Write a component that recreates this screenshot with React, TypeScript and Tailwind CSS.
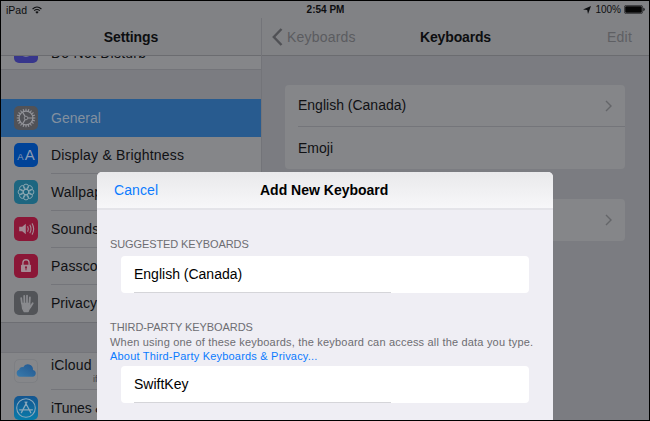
import type { ReactNode } from 'react';

function Chevron() {
  return (
    <svg width="8" height="12" viewBox="0 0 8 12" fill="none" stroke="#646569" strokeWidth="1.4">
      <path d="M1 1l5 5-5 5" />
    </svg>
  );
}

function GearIcon() {
  const teeth = Array.from({ length: 20 }, (_, i) => i * 18);
  return (
    <svg width="24" height="24" viewBox="0 0 24 24" fill="none" stroke="#93949a">
      <circle cx="12" cy="12" r="6.9" strokeWidth="1.3" />
      {teeth.map((a) => (
        <path key={a} d="M12 4.9V2.7" strokeWidth="1.1" transform={`rotate(${a} 12 12)`} />
      ))}
      <circle cx="12" cy="12" r="1.8" strokeWidth="0.9" />
      <path d="M13.8 12h5.3M11.1 10.4L8.5 6M11.1 13.6L8.5 18" strokeWidth="1.2" />
    </svg>
  );
}

function WallpaperIcon() {
  const petals = [0, 45, 90, 135, 180, 225, 270, 315];
  return (
    <svg width="24" height="24" viewBox="0 0 24 24" fill="none" stroke="#8fa9b3" strokeWidth="0.9">
      {petals.map((a) => (
        <circle key={a} cx="12" cy="6.7" r="2.6" transform={`rotate(${a} 12 12)`} />
      ))}
      <circle cx="12" cy="12" r="2.7" />
    </svg>
  );
}

function SoundIcon() {
  return (
    <svg width="24" height="24" viewBox="0 0 24 24" fill="none" stroke="#a58b95" strokeWidth="1.1">
      <path d="M5.2 9.7h3l3.6-3v10.6l-3.6-3h-3z" fill="#a58b95" stroke="none" />
      <path d="M13.6 9.2q1.5 2.8 0 5.6M15.8 7.8q2.4 4.2 0 8.4M18 6.4q3.3 5.6 0 11.2" />
    </svg>
  );
}

function LockIcon() {
  return (
    <svg width="24" height="24" viewBox="0 0 24 24">
      <path d="M8.9 11V8.8a3.1 3.1 0 0 1 6.2 0V11" fill="none" stroke="#a58b95" strokeWidth="1.4" />
      <rect x="7" y="10.7" width="10" height="7.3" rx="0.8" fill="#a58b95" />
      <circle cx="12" cy="13.3" r="1.1" fill="#861a39" />
      <path d="M12 13.5v2.8" stroke="#861a39" strokeWidth="0.9" />
    </svg>
  );
}

function HandIcon() {
  return (
    <svg width="24" height="24" viewBox="0 0 24 24" fill="none" stroke="#898a8e" strokeWidth="1.8" strokeLinecap="round" strokeLinejoin="round">
      <path d="M7.9 12.5L7.2 7.1M10.4 12L10.2 5M13 12V4.6M15.5 12.5l.4-6M16.2 16.2l2.5-4" />
      <path d="M7.9 12.3h7.7l1 3.6-1.9 3.1-.5 1.6h-4l-1.6-2.8z" fill="#898a8e" strokeWidth="1.2" />
    </svg>
  );
}

function CloudIcon() {
  return (
    <svg width="24" height="24" viewBox="0 0 24 24">
      <defs>
        <linearGradient id="cloud" x1="0" y1="1" x2="1" y2="0">
          <stop offset="0" stopColor="#397bac" />
          <stop offset="1" stopColor="#21568f" />
        </linearGradient>
      </defs>
      <rect x=".5" y=".5" width="23" height="23" rx="4.5" fill="none" stroke="#7a7b80" strokeWidth=".7" />
      <path d="M5.8 17.8a3.6 3.6 0 0 1-.6-7 3 3 0 0 1 4-2.6 5.2 5.2 0 0 1 9.8 2.7 3.5 3.5 0 0 1-.4 6.9z" fill="url(#cloud)" />
    </svg>
  );
}

function AppStoreIcon() {
  return (
    <svg width="24" height="24" viewBox="0 0 24 24" fill="none" stroke="#89a7bb" strokeWidth="1.3">
      <circle cx="12" cy="12" r="9.3" strokeWidth="1.1" />
      <path d="M12.9 6L7.4 16.6M11.1 6l5.7 10.8M5.6 13.8h12.8" strokeLinecap="round" />
    </svg>
  );
}

function Tile({ color, children }: { color: string; children?: ReactNode }) {
  return <div className={`h-6 w-6 shrink-0 overflow-hidden rounded-[5px] ${color}`}>{children}</div>;
}

type RowProps = { label: string; color: string; icon: ReactNode; text?: string; line?: boolean };

function Row({ label, color, icon, text = 'tracking-[0.15px] text-[#101114]', line = true }: RowProps) {
  return (
    <div className="flex h-[37px] shrink-0 pl-[13px]">
      <div className="pt-[6px]">
        <Tile color={color}>{icon}</Tile>
      </div>
      <div className={`ml-[13px] flex flex-1 items-center border-b ${line ? 'border-[#74757a]' : 'border-transparent'}`}>
        <span className={`text-[14px] whitespace-nowrap ${text}`}>{label}</span>
      </div>
    </div>
  );
}

function Sidebar() {
  return (
    <aside className="flex w-[261px] shrink-0 flex-col border-r border-[#737479] bg-[#7b7c81]">
      <div className="flex h-[38px] shrink-0 justify-center border-b border-[#6b6c70] bg-[#818285] pt-[9px] text-[14px] leading-[20px] font-bold tracking-[-0.1px] text-[#0d0e10]">
        Settings
      </div>
      <div className="flex h-[14px] shrink-0 items-end overflow-hidden border-b border-[#737479] bg-[#858689] pb-[6px] pl-[13px]">
        <Tile color="bg-[#37368c]">
          <svg width="24" height="24" viewBox="0 0 24 24">
            <path d="M7 13.5q5 5 10 0v2.5q-5 3.5-10 0z" fill="#888a9a" />
          </svg>
        </Tile>
        <span className="mb-[2px] ml-[13px] text-[14px] leading-[16px] tracking-[0.25px] text-[#101114]">Do Not Disturb</span>
      </div>
      <div className="h-[29px] shrink-0" />
      <div className="shrink-0 bg-[#285b8f] pt-px">
        <Row label="General" color="bg-[#515257]" icon={<GearIcon />} text="text-[#82909f]" line={false} />
      </div>
      <div className="shrink-0 border-b border-[#6d6e73] bg-[#858689]">
        <Row
          label="Display & Brightness"
          color="bg-[#004398]"
          text="tracking-[0.2px] text-[#101114]"
          icon={
            <div className="flex h-6 items-baseline justify-center gap-px pt-[3px] leading-[17px] text-[#8a9bb4]">
              <span className="text-[9.5px]">A</span>
              <span className="text-[15px]">A</span>
            </div>
          }
        />
        <Row label="Wallpaper" color="bg-[#1d6680]" icon={<WallpaperIcon />} />
        <Row label="Sounds" color="bg-[#8b1737]" icon={<SoundIcon />} />
        <Row label="Passcode" color="bg-[#8b1737]" icon={<LockIcon />} />
        <Row label="Privacy" color="bg-[#525458]" icon={<HandIcon />} text="text-[#101114]" line={false} />
      </div>
      <div className="h-[30px] shrink-0 border-b border-[#74757a]" />
      <div className="flex-1 overflow-hidden bg-[#858689]">
        <div className="flex h-[37px] pl-[13px]">
          <div className="pt-[6px]">
            <Tile color="bg-[#86878a]">
              <CloudIcon />
            </Tile>
          </div>
          <div className="ml-[13px] flex-1 border-b border-[#74757a] text-[#101114]">
            <div className="h-[20px] pt-[4px] text-[14px] leading-[17px] tracking-[0.15px]">iCloud</div>
            <div className="pl-[42px] text-[9px] leading-[12px] text-[#3f4043]">if</div>
          </div>
        </div>
        <Row
          label="iTunes & App Store"
          color="bg-linear-to-b from-[#14558f] to-[#067caa]"
          icon={<AppStoreIcon />}
          text="tracking-[-0.15px] text-[#101114]"
        />
      </div>
    </aside>
  );
}

function Detail() {
  return (
    <main className="flex flex-1 flex-col bg-[#7b7c81]">
      <div className="flex h-[38px] shrink-0 items-start border-b border-[#6b6c70] bg-[#818285] pt-[9px] pr-[17px] pl-[10px] text-[14px] leading-[20px]">
        <svg className="mt-[1px]" width="11" height="18" viewBox="0 0 11 18" fill="none" stroke="#505155" strokeWidth="2.4">
          <path d="M9.5 1L1.8 9l7.7 8" />
        </svg>
        <span className="ml-[4px] w-[133px] tracking-[0.2px] text-[#5b5c60]">Keyboards</span>
        <span className="font-bold tracking-[-0.15px] text-[#0d0e10]">Keyboards</span>
        <span className="ml-auto tracking-[0.2px] text-[#5e5f63]">Edit</span>
      </div>
      <div className="flex flex-col gap-[30px] pt-[29px] pr-[24px] pl-[23px] text-[14px] text-[#101114]">
        <div className="rounded-[4px] bg-[#858689] pl-[13px]">
          <div className="flex h-[42px] items-center justify-between border-b border-[#74757a] pr-[12px]">
            English (Canada)
            <Chevron />
          </div>
          <div className="flex h-[42px] items-center">Emoji</div>
        </div>
        <div className="flex h-[42px] items-center justify-end rounded-[4px] bg-[#858689] pr-[12px]">
          <Chevron />
        </div>
      </div>
    </main>
  );
}

function KeyboardCard({ name }: { name: string }) {
  return (
    <div className="ml-[11px] flex h-[37px] w-[408px] rounded-[4px] bg-white pl-[13px]">
      <div className="flex w-[257px] items-center border-b border-[#d5d5d9] text-[14px] text-black">{name}</div>
    </div>
  );
}

function AddKeyboardDialog() {
  return (
    <section className="absolute top-[171px] left-[96px] h-[248px] w-[456px] overflow-hidden rounded-t-[5px] bg-[#efeef4]">
      <div className="flex h-[38px] items-start border-b-2 border-[#e4e4e9] bg-linear-to-b from-[#e9e9eb] to-[#f7f7f9] pt-[8px] pl-[17px] text-[14px] leading-[20px]">
        <span className="w-[146px] tracking-[0.1px] text-[#0b7bff]">Cancel</span>
        <span className="font-bold text-black">Add New Keyboard</span>
      </div>
      <div className="pl-[13px] text-[11px] text-[#6d6d72]">
        <div className="h-[46px] pt-[26px] leading-[16px] tracking-[-0.1px]">SUGGESTED KEYBOARDS</div>
        <KeyboardCard name="English (Canada)" />
        <div className="h-[73px] pt-[26px] whitespace-nowrap">
          <div className="h-[17px] leading-[16px] tracking-[-0.07px]">THIRD-PARTY KEYBOARDS</div>
          <div className="h-[13px] leading-[13px] tracking-[0.19px]">
            When using one of these keyboards, the keyboard can access all the data you type.
          </div>
          <div className="h-[14px] leading-[14px] tracking-[0.2px] text-[#0b7bff]">About Third-Party Keyboards &amp; Privacy...</div>
        </div>
        <KeyboardCard name="SwiftKey" />
      </div>
    </section>
  );
}

function StatusBar() {
  return (
    <div className="grid h-[17px] shrink-0 grid-cols-3 items-center bg-[#818285] pr-[4px] pl-[5px] text-[10px] leading-[16px] text-[#0d0e10]">
      <div className="flex items-center gap-[5px] text-[10.5px]">
        iPad
        <svg width="10" height="8" viewBox="0 0 10 8" fill="none" stroke="#0d0e10" strokeWidth="1.1">
          <path d="M.6 3Q5-1 9.4 3M2.2 4.7Q5 2.2 7.8 4.7" />
          <path d="M3.4 5.9Q5 4.7 6.6 5.9L5 7.7z" fill="#0d0e10" stroke="none" />
        </svg>
      </div>
      <div className="text-center text-[10px] font-bold">2:54 PM</div>
      <div className="flex items-center justify-end">
        <svg width="8" height="8" viewBox="0 0 8 8" fill="#0d0e10">
          <path d="M8 0L5 8 4.2 3.9 0 3.4z" />
        </svg>
        <span className="mr-[3px] ml-[4px]">100%</span>
        <svg width="21" height="9" viewBox="0 0 21 9">
          <rect x=".4" y=".4" width="18.2" height="8.2" rx="1.8" fill="none" stroke="#1c1d1f" strokeWidth=".7" />
          <rect x="1.2" y="1.2" width="16.6" height="6.6" rx="1.2" fill="#050505" />
          <path d="M19.4 2.8q1.3.3 1.3 1.7t-1.3 1.7z" fill="#0d0e10" />
        </svg>
      </div>
    </div>
  );
}

export default function App() {
  return (
    <div className="relative flex h-[421px] w-[650px] flex-col overflow-hidden border border-black bg-[#7b7c81] font-['Liberation_Sans',Arial,sans-serif]">
      <StatusBar />
      <div className="flex min-h-0 flex-1">
        <Sidebar />
        <Detail />
      </div>
      <AddKeyboardDialog />
    </div>
  );
}
